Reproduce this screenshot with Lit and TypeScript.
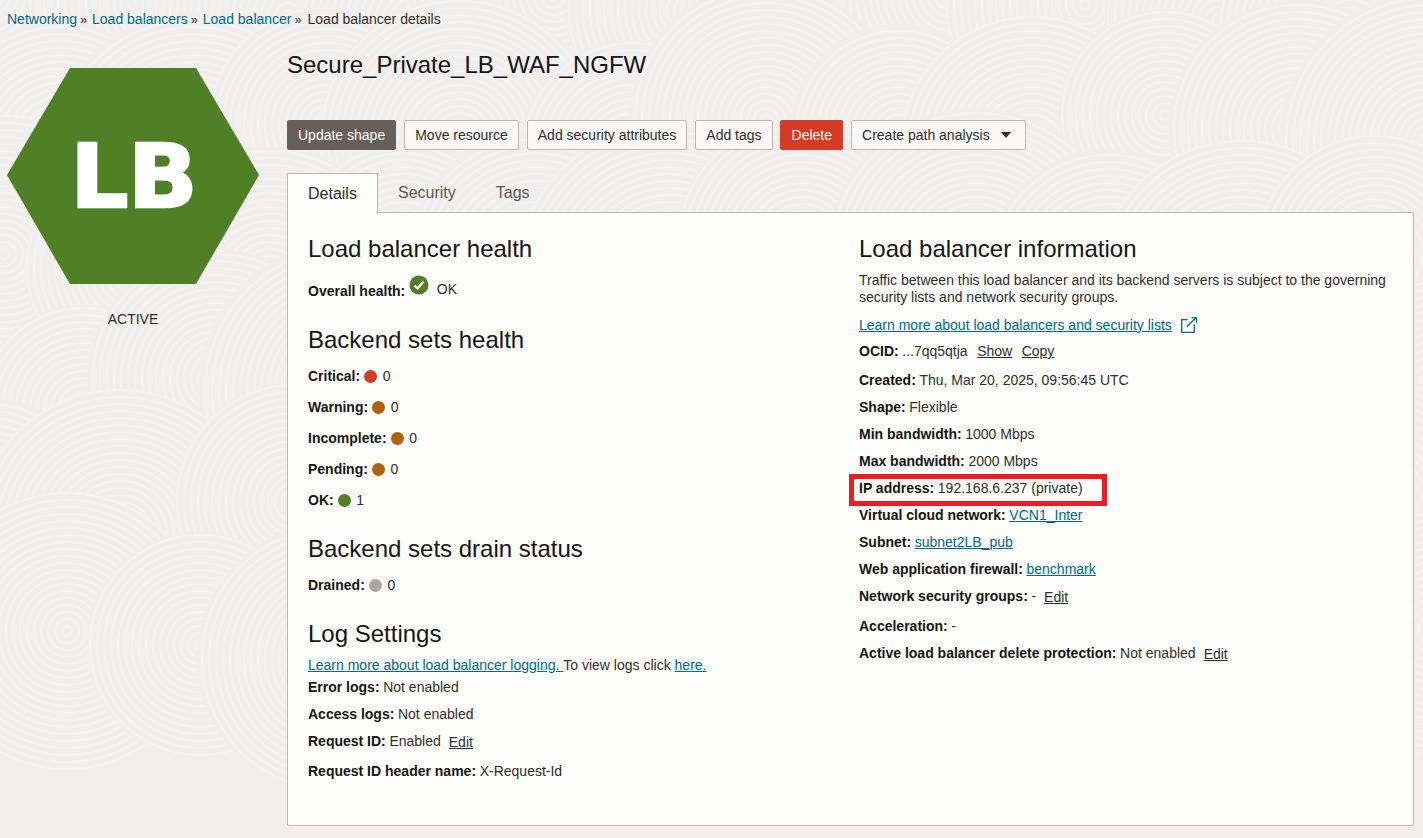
import { LitElement, html, css, svg } from "lit";
import { customElement } from "lit/decorators.js";

// Fingerprint-like wallpaper: discs of concentric rings, later discs cover earlier ones.
const swirls: [number, number, number][] = [];
for (let row = 0; row < 6; row++) {
  for (let col = 0; col < 11; col++) {
    const x = col * 137 + (row % 2 ? 68 : 0) + ((col * 37 + row * 53) % 41) - 20;
    const y = row * 128 + 10 + ((col * 61 + row * 29) % 47) - 23;
    const r = 105 + ((col * 23 + row * 17) % 50);
    swirls.push([x, y, r]);
  }
}

@customElement("app-root")
export class AppRoot extends LitElement {
  static styles = css`
    :host {
      display: block;
      position: relative;
      height: 838px;
      overflow: hidden;
      background: #f0efed;
      font-family: "Liberation Sans", Arial, sans-serif;
      font-size: 14px;
      color: #312d2a;
    }
    .backdrop { position: absolute; inset: 0; width: 100%; height: 100%; }
    .page { position: relative; display: flex; flex-direction: column; height: 100%; }
    a { color: #00688c; text-decoration: none; }
    .crumbs {
      display: flex; align-items: center; height: 38px; padding-left: 7px;
      box-sizing: border-box; color: #312d2a; white-space: pre;
    }
    .crumbs .sep { font-size: 13px; font-weight: 700; width: 15px; padding-left: 3px; box-sizing: border-box; color: #665f5b; }
    .crumbs .sep.last { width: 16px; }
    .body { display: flex; align-items: flex-start; }
    .side { width: 287px; flex: none; display: flex; flex-direction: column; }
    .hex { display: block; margin: 30px 0 0 7px; width: 252px; height: 216px; }
    .hex text { font-family: "DejaVu Sans", sans-serif; font-weight: 700; font-size: 87px; fill: #fff; stroke: #fff; stroke-width: 2.6px; }
    .state { width: 266px; text-align: center; margin-top: 27px; line-height: 16px; color: #312d2a; }
    .main { width: 1127px; flex: none; }
    h1 { margin: 0; font-size: 24px; font-weight: 400; line-height: 54px; color: #161513; }
    .actions { display: flex; gap: 8px; margin-top: 28px; }
    .btn {
      box-sizing: border-box; height: 30px; padding: 0 10px; display: flex; align-items: center;
      border: 1px solid #bcb6b1; border-radius: 2px; background: #f9f8f7; color: #312d2a;
      font-size: 14px; font-family: inherit; white-space: nowrap;
    }
    .btn.primary { background: #665f5b; border-color: #665f5b; color: #fff; }
    .btn.danger { background: #d63b25; border-color: #d63b25; color: #fff; margin-left: -1px; padding: 0 10px 0 11px; }
    .caret { width: 0; height: 0; border-left: 5.5px solid transparent; border-right: 5.5px solid transparent; border-top: 6px solid #312d2a; margin-left: 11px; margin-right: 4px; }
    .tabs { display: flex; margin-top: 23px; height: 40px; position: relative; z-index: 1; font-size: 16px; }
    .tab { padding: 0 20px; display: flex; align-items: center; color: #5c5853; }
    .tab.on {
      box-sizing: border-box; width: 91px; padding: 0 0 0 20px; background: #fdfdfb;
      border: 1px solid #bcb6b1; border-bottom: 0; color: #312d2a; height: 41px;
    }
    .panel {
      box-sizing: border-box; height: 614px; margin-top: -1px; padding: 21px 0 0 20px;
      background: #fdfdfb; border: 1px solid #bcb6b1; border-radius: 0 2px 2px 2px; display: flex;
    }
    .col { width: 551px; flex: none; }
    .col.right { width: 540px; }
    h2 { margin: 0; font-size: 24px; font-weight: 400; line-height: 30px; color: #161513; }
    b { font-weight: 700; color: #161513; }
    .row { display: flex; align-items: center; line-height: 27px; height: 27px; white-space: pre; }
    .row.s { height: 31px; }
    .row b { margin-right: 3.6px; }
    .dot { width: 13px; height: 13px; border-radius: 50%; margin: 0 5.6px 0 0.4px; flex: none; }
    .overall { margin-top: 14px; }
    .overall span { margin-top: -5px; }
    .check { margin: -13px 8px 0 0; flex: none; }
    .u { text-decoration: underline; }
    .act { color: #312d2a; text-decoration: underline; margin-left: 9.5px; }
    .act.edit { margin-top: 2px; margin-left: 8px; }
    .g1 { margin-top: 20px; }
    .g2 { margin-top: 6px; }
    .g3 { margin-top: 18px; }
    .g4 { margin-top: 6px; }
    .g5 { margin-top: 18px; }
    .mt6 { margin-top: 3px; }
    .log { height: 22px; line-height: 22px; margin-top: 5px; margin-bottom: -2px; }
    .para { margin: 8px 0 0; line-height: 17px; }
    .learn { display: flex; align-items: center; margin-top: 9px; height: 20px; }
    .learn svg { margin-left: 9px; }
    .ocid { height: 31px; margin-top: 1px; }
    .nsg { height: 30px; padding-bottom: 4px; box-sizing: border-box; }
    .ipwrap { position: relative; }
    .mark { position: absolute; left: -10px; top: -1px; width: 258px; height: 32px; box-sizing: border-box; border: 5px solid #ed1c24; }
  `;

  private dotRow(label: string, color: string, val: string) {
    return html`<div class="row s"><b>${label}:</b><span class="dot" style="background:${color}"></span>${val}</div>`;
  }

  render() {
    return html`
      <svg class="backdrop" fill="none" stroke="#f3f2f0" stroke-width="2" aria-hidden="true">
        ${swirls.map(([x, y, r]) => {
          const rings = [svg`<circle cx=${x} cy=${y} r=${r} fill="#f0efed" stroke="none" />`];
          for (let q = 5; q < r; q += 7) rings.push(svg`<circle cx=${x} cy=${y} r=${q} />`);
          return rings;
        })}
      </svg>
      <div class="page">
        <nav class="crumbs"><a>Networking</a><span class="sep">»</span><a>Load balancers</a><span class="sep">»</span><a>Load balancer</a><span class="sep last">»</span><span>Load balancer details</span></nav>
        <div class="body">
          <aside class="side">
            <svg class="hex" viewBox="0 0 252 216">
              <polygon points="0,107 63,0 189,0 252,107 189,216 63,216" fill="#508025" />
              <text x="127" y="139" text-anchor="middle" textLength="127" lengthAdjust="spacingAndGlyphs">LB</text>
            </svg>
            <div class="state">ACTIVE</div>
          </aside>
          <main class="main">
            <h1>Secure_Private_LB_WAF_NGFW</h1>
            <div class="actions">
              <button class="btn primary">Update shape</button>
              <button class="btn">Move resource</button>
              <button class="btn">Add security attributes</button>
              <button class="btn">Add tags</button>
              <button class="btn danger">Delete</button>
              <button class="btn">Create path analysis<span class="caret"></span></button>
            </div>
            <div class="tabs">
              <div class="tab on">Details</div>
              <div class="tab">Security</div>
              <div class="tab">Tags</div>
            </div>
            <section class="panel">
              <div class="col">
                <h2>Load balancer health</h2>
                <div class="row overall"><b>Overall health:</b>
                  <svg class="check" width="20" height="20" viewBox="0 0 20 20"><circle cx="10" cy="10" r="9.5" fill="#508025"/><path d="M5.5 10.5l3 3 6-7" fill="none" stroke="#fff" stroke-width="2.4"/></svg><span>OK</span></div>
                <h2 class="g1">Backend sets health</h2>
                <div class="g2">
                  ${this.dotRow("Critical", "#d63b25", "0")}
                  ${this.dotRow("Warning", "#ac630c", "0")}
                  ${this.dotRow("Incomplete", "#ac630c", "0")}
                  ${this.dotRow("Pending", "#ac630c", "0")}
                  ${this.dotRow("OK", "#508025", "1")}
                </div>
                <h2 class="g3">Backend sets drain status</h2>
                <div class="g4">${this.dotRow("Drained", "#aca7a3", "0")}</div>
                <h2 class="g5">Log Settings</h2>
                <div class="row log"><a class="u">Learn more about load balancer logging. </a>To view logs click <a class="u">here.</a></div>
                <div class="row"><b>Error logs:</b>Not enabled</div>
                <div class="row"><b>Access logs:</b>Not enabled</div>
                <div class="row"><b>Request ID:</b>Enabled<a class="act edit">Edit</a></div>
                <div class="row mt6"><b>Request ID header name:</b>X-Request-Id</div>
              </div>
              <div class="col right">
                <h2>Load balancer information</h2>
                <p class="para">Traffic between this load balancer and its backend servers is subject to the governing security lists and network security groups.</p>
                <div class="learn"><a class="u">Learn more about load balancers and security lists</a>
                  <svg width="16" height="16" viewBox="0 0 16 16" fill="none" stroke="#00688c" stroke-width="1.3"><path d="M6.5 2.7H.7v12.6h12.6V7.5M6 9.5L14.8 1M10.5 .8h5v5"/></svg></div>
                <div class="row ocid"><b>OCID:</b>...7qq5qtja<a class="act">Show</a><a class="act">Copy</a></div>
                <div class="row"><b>Created:</b>Thu, Mar 20, 2025, 09:56:45 UTC</div>
                <div class="row"><b>Shape:</b>Flexible</div>
                <div class="row"><b>Min bandwidth:</b>1000 Mbps</div>
                <div class="row"><b>Max bandwidth:</b>2000 Mbps</div>
                <div class="ipwrap"><div class="row"><b>IP address:</b>192.168.6.237 (private)</div><div class="mark"></div></div>
                <div class="row"><b>Virtual cloud network:</b><a class="u">VCN1_Inter</a></div>
                <div class="row"><b>Subnet:</b><a class="u">subnet2LB_pub</a></div>
                <div class="row"><b>Web application firewall:</b><a class="u">benchmark</a></div>
                <div class="row nsg"><b>Network security groups:</b>-<a class="act edit">Edit</a></div>
                <div class="row"><b>Acceleration:</b>-</div>
                <div class="row"><b>Active load balancer delete protection:</b>Not enabled<a class="act edit">Edit</a></div>
              </div>
            </section>
          </main>
        </div>
      </div>
    `;
  }
}
